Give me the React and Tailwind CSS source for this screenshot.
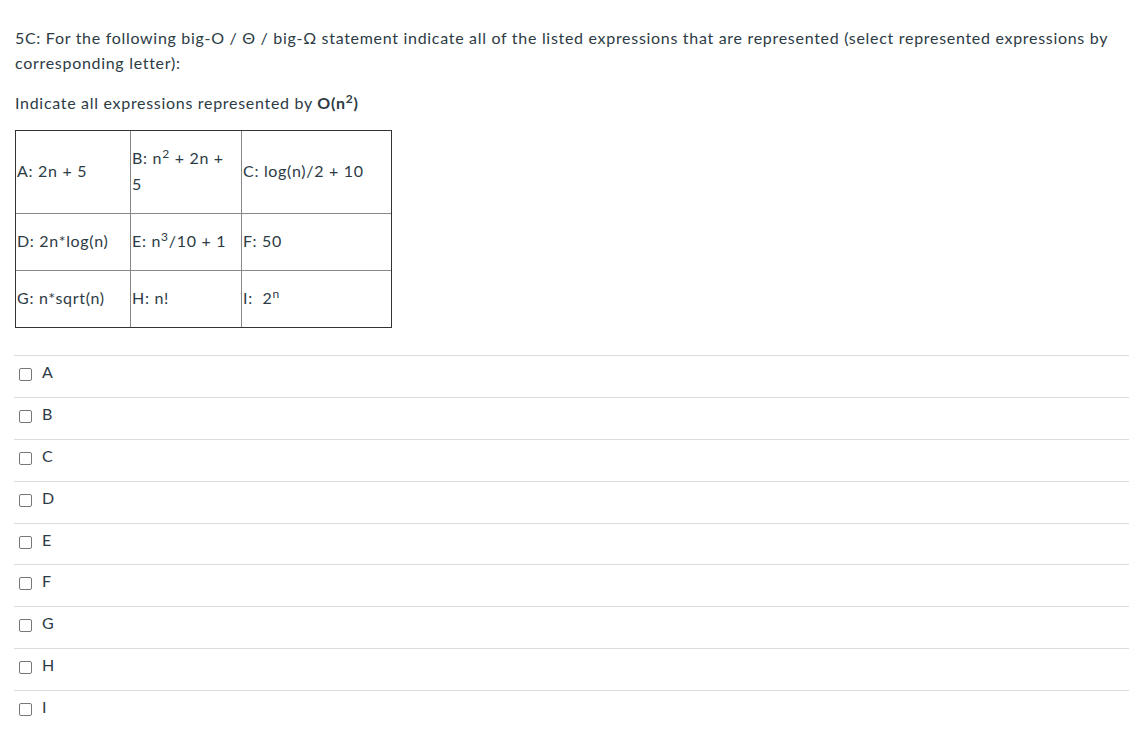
const cells = [
  [
    { key: 'a', content: <>A: 2n + 5</> },
    {
      key: 'b',
      content: (
        <>
          B: n<sup>2</sup> + 2n +
          <br />5
        </>
      ),
    },
    { key: 'c', content: <>C: log(n)/2 + 10</> },
  ],
  [
    { key: 'd', content: <>D: 2n*log(n)</> },
    {
      key: 'e',
      content: (
        <>
          E: n<sup>3</sup>/10 + 1
        </>
      ),
    },
    { key: 'f', content: <>F: 50</> },
  ],
  [
    { key: 'g', content: <>G: n*sqrt(n)</> },
    { key: 'h', content: <>H: n!</> },
    {
      key: 'i',
      content: (
        <>
          I:&nbsp; 2<sup>n</sup>
        </>
      ),
    },
  ],
];

const rowHeights = ['h-[83px]', 'h-[57px]', 'h-[56px]'];
const colWidths = ['w-[115px]', 'w-[111px]', 'w-[149px]'];

const answers = ['A', 'B', 'C', 'D', 'E', 'F', 'G', 'H', 'I'];

export default function App() {
  return (
    <div
      className="min-h-screen bg-white px-[14px] pt-[25px] text-[16px] tracking-[0.7px] text-[#2d3b45]"
      style={{ fontFamily: 'Lato, "Noto Sans", sans-serif' }}
    >
      <p className="pl-[1px] leading-[25px] mb-[15px]">
        5C: For the following big-O / Θ / big-Ω statement indicate all of the listed expressions that are
        represented (select represented expressions by corresponding letter):
      </p>
      <p className="pl-[1px] leading-[25px] mb-[15px]">
        Indicate all expressions represented by{' '}
        <strong className="font-bold">
          O(n<sup>2</sup>)
        </strong>
      </p>

      <div className="ml-[1px] w-[377px] border border-[#333]">
        {cells.map((row, r) => (
          <div key={r} className={`flex ${rowHeights[r]} ${r < 2 ? 'border-b border-[#888]' : ''}`}>
            {row.map((cell, c) => (
              <div
                key={cell.key}
                className={`${colWidths[c]} flex items-center pl-[1px] pb-[2px] leading-[26px] ${
                  c < 2 ? 'border-r border-[#888]' : ''
                }`}
              >
                <div>{cell.content}</div>
              </div>
            ))}
          </div>
        ))}
      </div>

      <div className="mt-[27px]">
        {answers.map((letter) => (
          <div key={letter} className="flex items-start h-[41.875px] border-t border-[#dcdcdc] pt-[4px]">
            <span className="mt-[8px] ml-[5px] w-[13px] h-[13px] rounded-[2px] border border-[#777] bg-white shrink-0" />
            <span className="ml-[10px] leading-[24px]">{letter}</span>
          </div>
        ))}
      </div>
    </div>
  );
}
